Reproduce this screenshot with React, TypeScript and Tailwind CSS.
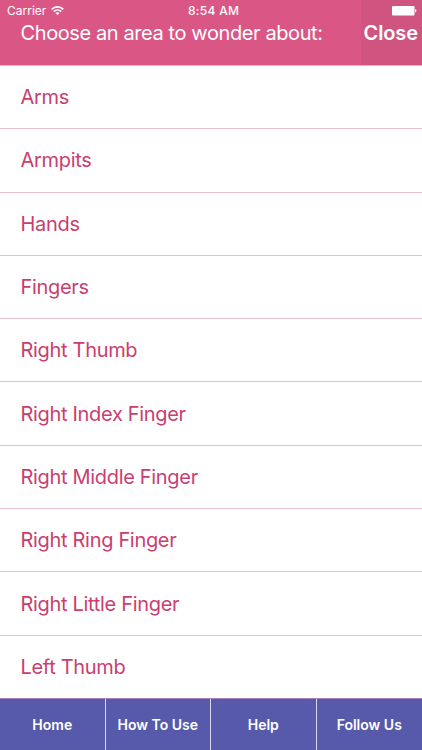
const areas = [
  'Arms',
  'Armpits',
  'Hands',
  'Fingers',
  'Right Thumb',
  'Right Index Finger',
  'Right Middle Finger',
  'Right Ring Finger',
  'Right Little Finger',
  'Left Thumb',
];

const tabs = ['Home', 'How To Use', 'Help', 'Follow Us'];

function WifiIcon() {
  return (
    <svg width="13" height="10" viewBox="0 0 13 10" fill="none" stroke="white" strokeWidth="1.6">
      <path d="M0.7 3.4C3.9 0 9.1 0 12.3 3.4" />
      <path d="M2.7 5.6C4.9 3.4 8.1 3.4 10.3 5.6" />
      <path d="M6.5 9.1L4.4 7C5.6 5.9 7.4 5.9 8.6 7Z" fill="white" stroke="none" />
    </svg>
  );
}

function BatteryIcon() {
  return (
    <svg width="25" height="10" viewBox="0 0 25 10" fill="white">
      <rect x="0" y="0" width="22.5" height="9.6" rx="1" />
      <path d="M23.2 3.1C24.8 3.3 24.8 6.3 23.2 6.5Z" />
    </svg>
  );
}

function Header() {
  return (
    <header className="flex h-[65px] shrink-0 bg-[#da5785] text-white">
      <div className="flex flex-1 flex-col">
        <div className="flex h-[22px] items-center pl-[7px]">
          <span className="w-[44px] text-[12px] leading-none tracking-[0px]">Carrier</span>
          <WifiIcon />
          <span className="ml-[124px] whitespace-nowrap text-[12px] font-medium leading-none tracking-[0.3px]">8:54 AM</span>
        </div>
        <h1 className="whitespace-nowrap pl-[20.5px] text-[20px] leading-[22px] tracking-[-0.4px]">
          Choose an area to wonder about:
        </h1>
      </div>
      <div className="flex w-[61px] flex-col bg-[#d05480]">
        <div className="flex h-[22px] items-center pl-[30.5px]">
          <BatteryIcon />
        </div>
        <button className="pl-[2.5px] text-left text-[20px] font-semibold leading-[22px] tracking-[-0.1px]">Close</button>
      </div>
    </header>
  );
}

export default function App() {
  return (
    <div className="flex h-[750px] w-[422px] flex-col overflow-hidden bg-white font-['Inter',sans-serif]">
      <Header />
      <ul className="h-[633px] shrink-0 overflow-hidden border-t border-[#f6a8c6]">
        {areas.map((area) => (
          <li key={area} className="flex h-[63.3px] items-center border-b border-[#e9bfd0] pl-[20.5px] text-[20px] tracking-[-0.32px] text-[#c93e70]">
            {area}
          </li>
        ))}
      </ul>
      <nav className="grid flex-1 grid-cols-4 border-t border-[#a583b8] bg-[#575aaa]">
        {tabs.map((tab) => (
          <button key={tab} className="border-r border-[#d8d7ee] text-[14px] font-semibold text-white last:border-r-0">
            {tab}
          </button>
        ))}
      </nav>
    </div>
  );
}
